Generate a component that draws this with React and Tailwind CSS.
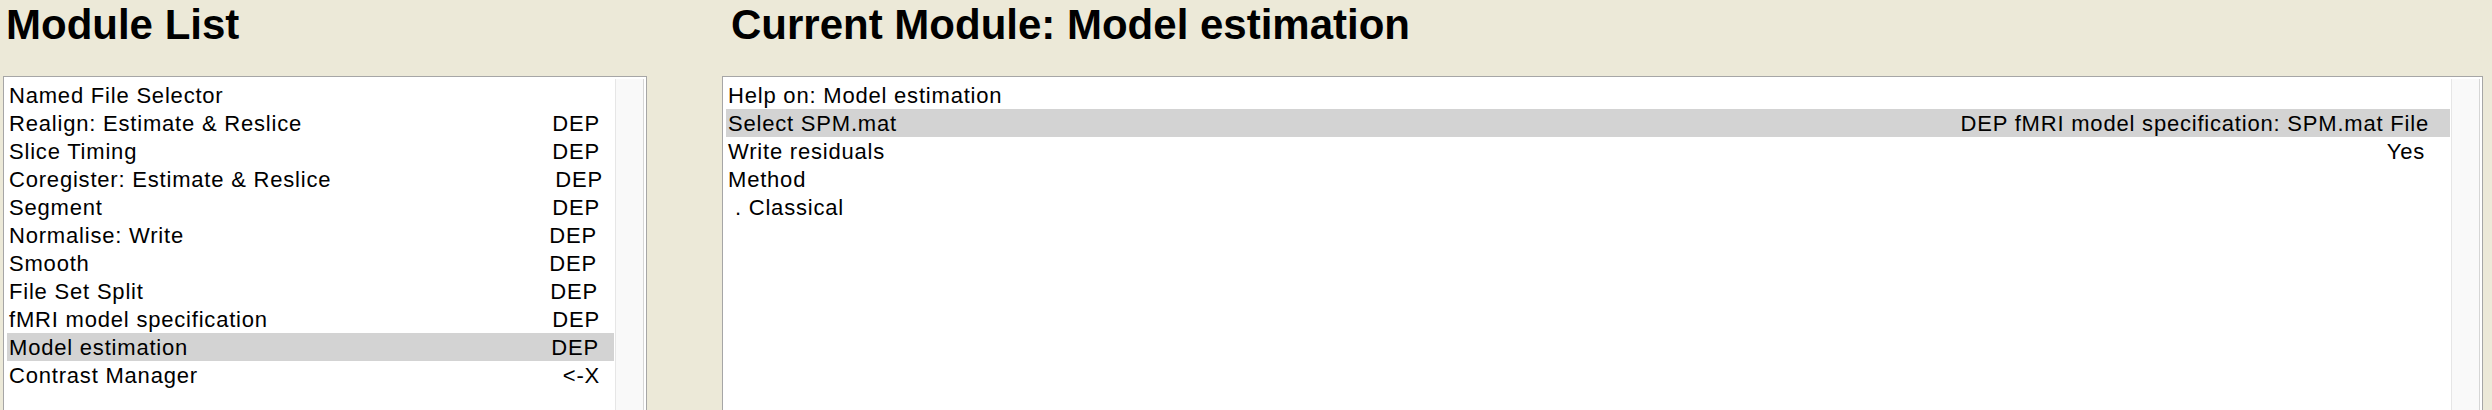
const MODULES = [
  { name: 'Named File Selector', status: '', pr: 'pr-[14px]' },
  { name: 'Realign: Estimate & Reslice', status: 'DEP', pr: 'pr-[14px]' },
  { name: 'Slice Timing', status: 'DEP', pr: 'pr-[14px]' },
  { name: 'Coregister: Estimate & Reslice', status: 'DEP', pr: 'pr-[11px]' },
  { name: 'Segment', status: 'DEP', pr: 'pr-[14px]' },
  { name: 'Normalise: Write', status: 'DEP', pr: 'pr-[17px]' },
  { name: 'Smooth', status: 'DEP', pr: 'pr-[17px]' },
  { name: 'File Set Split', status: 'DEP', pr: 'pr-[16px]' },
  { name: 'fMRI model specification', status: 'DEP', pr: 'pr-[14px]' },
  { name: 'Model estimation', status: 'DEP', pr: 'pr-[15px]', selected: true },
  { name: 'Contrast Manager', status: '<-X', pr: 'pr-[14px]' },
];

const OPTIONS = [
  { name: 'Help on: Model estimation', value: '', pr: 'pr-[21px]' },
  { name: 'Select SPM.mat', value: 'DEP fMRI model specification: SPM.mat File', pr: 'pr-[21px]', selected: true },
  { name: 'Write residuals', value: 'Yes', pr: 'pr-[25px]' },
  { name: 'Method', value: '', pr: 'pr-[21px]' },
  { name: '\u00a0. Classical', value: '', pr: 'pr-[21px]' },
];

function Row({ label, value, pr, selected }) {
  return (
    <div
      className={`flex h-[28px] items-start justify-between gap-4 whitespace-nowrap pl-[2px] leading-[30px] ${pr} ${
        selected ? 'bg-[#d3d3d3]' : ''
      }`}
    >
      <span>{label}</span>
      <span>{value}</span>
    </div>
  );
}

function ListBox({ children }) {
  return (
    <div className="flex h-[350px] shrink-0 border border-[#a6a6a6] bg-white pl-[3px] pr-[2px] pt-[2px]">
      <div className="flex-1 pt-[2px] text-[22px] tracking-[0.8px] text-black">{children}</div>
      <div className="ml-[1px] w-[29px] border-l border-r border-l-[#e6e6e6] border-r-[#d6d6d6] bg-[#f9f9f9]" />
    </div>
  );
}

export default function App() {
  return (
    <div className="flex h-[410px] w-[2492px] overflow-hidden bg-[#ece9d8] font-['Liberation_Sans',Arial,sans-serif] text-black">
      <div className="ml-[3px] flex w-[644px] shrink-0 flex-col">
        <h1 className="h-[76px] shrink-0 pl-[3px] pt-[4px] text-[42px] font-bold leading-[42px]">Module List</h1>
        <ListBox>
          {MODULES.map((m) => (
            <Row key={m.name} label={m.name} value={m.status} pr={m.pr} selected={m.selected} />
          ))}
        </ListBox>
      </div>

      <div className="ml-[75px] flex w-[1761px] shrink-0 flex-col">
        <h1 className="h-[76px] shrink-0 pl-[9px] pt-[4px] text-[42px] font-bold leading-[42px]">
          Current Module: Model estimation
        </h1>
        <ListBox>
          {OPTIONS.map((o) => (
            <Row key={o.name} label={o.name} value={o.value} pr={o.pr} selected={o.selected} />
          ))}
        </ListBox>
      </div>
    </div>
  );
}
